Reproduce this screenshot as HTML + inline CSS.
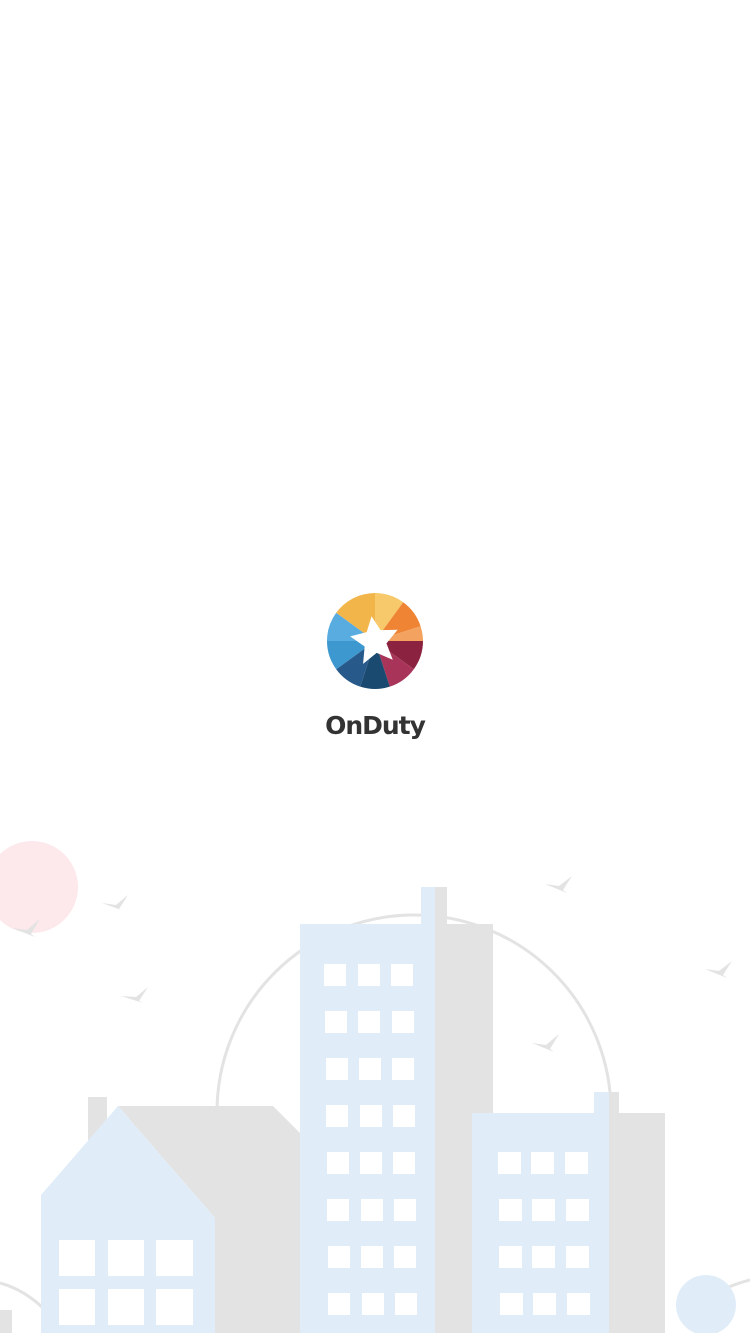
<!DOCTYPE html>
<html><head><meta charset="utf-8"><style>
html,body{margin:0;padding:0;background:#fff;width:750px;height:1333px;overflow:hidden}
svg{position:absolute;left:0;top:0}
</style></head><body>
<svg width="750" height="1333" viewBox="0 0 750 1333" xmlns="http://www.w3.org/2000/svg">
<circle cx="32" cy="887" r="46" fill="#fde8ec"/>
<circle cx="414" cy="1112" r="197" fill="none" stroke="#e3e3e3" stroke-width="3"/>
<path d="M0 1283 Q25 1290 45 1310" fill="none" stroke="#e3e3e3" stroke-width="3"/>
<path d="M700 1300 Q730 1285 750 1280" fill="none" stroke="#e3e3e3" stroke-width="3"/>
<rect x="0" y="1310" width="12" height="23" fill="#e3e3e3"/>
<g fill="#e3e3e3">
<path d="M102 903 L116 905 L128 895 L119 909 L124 911 Z"/>
<path d="M12 928 L27 930 L40 919 L31 934 L35 937 Z"/>
<path d="M121 996 L136 997 L148 987 L139 1001 L143 1003 Z"/>
<path d="M545 884 L559 886 L572 876 L563 890 L567 893 Z"/>
<path d="M532 1043 L546 1045 L559 1034 L550 1049 L554 1052 Z"/>
<path d="M705 969 L719 971 L732 961 L723 975 L727 978 Z"/>
</g>
<rect x="88" y="1097" width="19" height="236" fill="#e3e3e3"/>
<polygon points="118,1106 273,1106 300,1133 300,1333 215,1333 215,1218" fill="#e3e3e3"/>
<polygon points="41,1195 118,1106 215,1218 215,1333 41,1333" fill="#e0edf9"/>
<g fill="#fff">
<rect x="59" y="1240" width="36" height="36"/><rect x="108" y="1240" width="36" height="36"/><rect x="156" y="1240" width="37" height="36"/>
<rect x="59" y="1289" width="36" height="36"/><rect x="108" y="1289" width="36" height="36"/><rect x="156" y="1289" width="37" height="36"/>
</g>
<rect x="435" y="887" width="12" height="40" fill="#e3e3e3"/>
<rect x="435" y="924" width="58" height="409" fill="#e3e3e3"/>
<rect x="421" y="887" width="14" height="40" fill="#e0edf9"/>
<rect x="300" y="924" width="135" height="409" fill="#e0edf9"/>
<g fill="#fff">
<rect x="324" y="964" width="22" height="22"/><rect x="358" y="964" width="22" height="22"/><rect x="391" y="964" width="22" height="22"/>
<rect x="325" y="1011" width="22" height="22"/><rect x="358" y="1011" width="22" height="22"/><rect x="392" y="1011" width="22" height="22"/>
<rect x="326" y="1058" width="22" height="22"/><rect x="359" y="1058" width="22" height="22"/><rect x="392" y="1058" width="22" height="22"/>
<rect x="326" y="1105" width="22" height="22"/><rect x="360" y="1105" width="22" height="22"/><rect x="393" y="1105" width="22" height="22"/>
<rect x="327" y="1152" width="22" height="22"/><rect x="360" y="1152" width="22" height="22"/><rect x="393" y="1152" width="22" height="22"/>
<rect x="327" y="1199" width="22" height="22"/><rect x="361" y="1199" width="22" height="22"/><rect x="394" y="1199" width="22" height="22"/>
<rect x="328" y="1246" width="22" height="22"/><rect x="361" y="1246" width="22" height="22"/><rect x="394" y="1246" width="22" height="22"/>
<rect x="328" y="1293" width="22" height="22"/><rect x="362" y="1293" width="22" height="22"/><rect x="395" y="1293" width="22" height="22"/>
</g>
<rect x="609" y="1092" width="10" height="30" fill="#e3e3e3"/>
<rect x="609" y="1113" width="56" height="220" fill="#e3e3e3"/>
<rect x="594" y="1092" width="15" height="25" fill="#e0edf9"/>
<rect x="472" y="1113" width="137" height="220" fill="#e0edf9"/>
<g fill="#fff">
<rect x="498" y="1152" width="23" height="22"/><rect x="531" y="1152" width="23" height="22"/><rect x="565" y="1152" width="23" height="22"/>
<rect x="499" y="1199" width="23" height="22"/><rect x="532" y="1199" width="23" height="22"/><rect x="566" y="1199" width="23" height="22"/>
<rect x="499" y="1246" width="23" height="22"/><rect x="532" y="1246" width="23" height="22"/><rect x="566" y="1246" width="23" height="22"/>
<rect x="500" y="1293" width="23" height="22"/><rect x="533" y="1293" width="23" height="22"/><rect x="567" y="1293" width="23" height="22"/>
</g>
<circle cx="706" cy="1305" r="30" fill="#e0edf9"/>
<g transform="translate(375,641)">
<path d="M0 0 L0 -48 A48 48 0 0 1 28.2 -38.8 Z" fill="#f7c96a"/>
<path d="M0 0 L28.2 -38.8 A48 48 0 0 1 45.6 -14.8 Z" fill="#ee8434"/>
<path d="M0 0 L45.6 -14.8 A48 48 0 0 1 48 0 Z" fill="#f3a35f"/>
<path d="M0 0 L48 0 A48 48 0 0 1 38.8 28.2 Z" fill="#8b2340"/>
<path d="M0 0 L38.8 28.2 A48 48 0 0 1 14.8 45.6 Z" fill="#a83559"/>
<path d="M0 0 L14.8 45.6 A48 48 0 0 1 -14.8 45.6 Z" fill="#1a4a70"/>
<path d="M0 0 L-14.8 45.6 A48 48 0 0 1 -38.8 28.2 Z" fill="#275a8a"/>
<path d="M0 0 L-38.8 28.2 A48 48 0 0 1 -48 0 Z" fill="#3d98cf"/>
<path d="M0 0 L-48 0 A48 48 0 0 1 -38.8 -28.2 Z" fill="#59acdf"/>
<path d="M0 0 L-38.8 -28.2 A48 48 0 0 1 0 -48 Z" fill="#f2b54a"/>
<polygon fill="#fff" transform="rotate(-8)" points="0,-25 7,-10 24,-8 11,4 15,21 0,12 -15,21 -11,4 -24,-8 -7,-10"/>
</g>
<text x="375" y="734" text-anchor="middle" font-family="DejaVu Sans, sans-serif" font-weight="bold" font-size="25" letter-spacing="-1" fill="#333">OnDuty</text>
</svg>
</body></html>
